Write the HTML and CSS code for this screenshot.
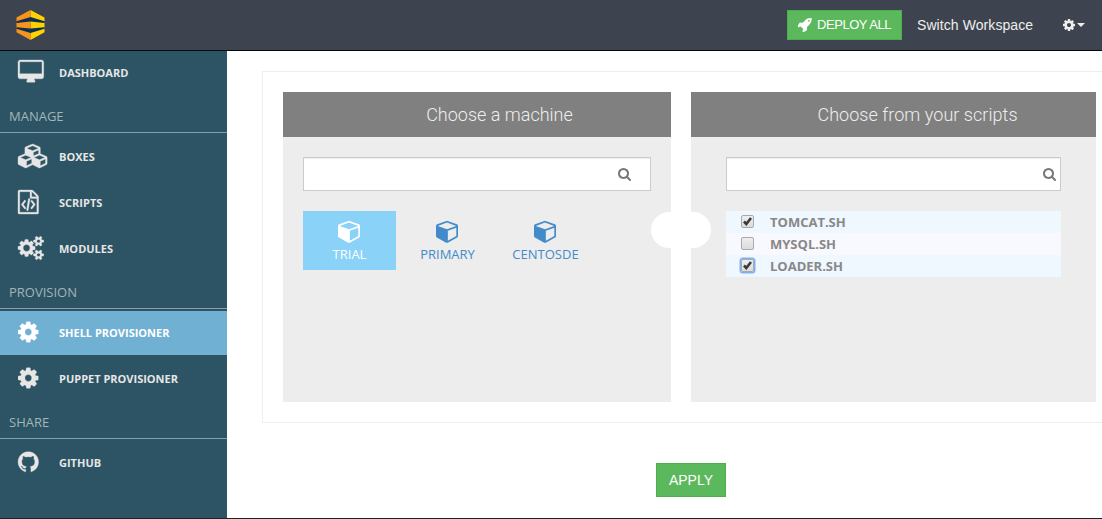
FILE: index.html
```html
<!DOCTYPE html>
<html lang="en">
<head>
<meta charset="utf-8">
<title>Shell Provisioner</title>
<link rel="stylesheet" href="styles.css">
</head>
<body>
<svg class="defs" aria-hidden="true">
  <symbol id="cog" viewBox="128 0 1536 1792"><path d="M1152 896q0-106-75-181t-181-75-181 75-75 181 75 181 181 75 181-75 75-181zm512-109v222q0 12-8 23t-20 13l-185 28q-19 54-39 91 35 50 107 138 10 12 10 25t-9 23q-27 37-99 108t-94 71q-12 0-26-9l-138-108q-44 23-91 38-16 136-29 186-7 28-36 28h-222q-14 0-24.500-8.500t-11.500-21.500l-28-184q-49-16-90-37l-141 107q-10 9-25 9-14 0-25-11-126-114-165-168-7-10-7-23 0-12 8-23 15-21 51-66.500t54-70.500q-27-50-41-99l-183-27q-13-2-21-12.500t-8-23.500v-222q0-12 8-23t19-13l186-28q14-46 39-92-40-57-107-138-10-12-10-24 0-10 9-23 26-36 98.500-107.500t94.500-71.500q13 0 26 10l138 107q44-23 91-38 16-136 29-186 7-28 36-28h222q14 0 24.500 8.500t11.500 21.500l28 184q49 16 90 37l142-107q9-9 24-9 13 0 25 10 129 119 165 170 7 8 7 22 0 12-8 23-15 21-51 66.500t-54 70.500q26 50 41 98l183 28q13 2 21 12.500t8 23.500z"/></symbol>
  <symbol id="search" viewBox="64 128 1664 1664"><path d="M1216 832q0-185-131.500-316.500t-316.500-131.500-316.500 131.500-131.500 316.500 131.500 316.500 316.500 131.500 316.500-131.500 131.500-316.500zm512 832q0 52-38 90t-90 38q-54 0-90-38l-343-342q-179 124-399 124-143 0-273.500-55.500t-225-150-150-225-55.500-273.500 55.500-273.500 150-225 225-150 273.500-55.500 273.500 55.500 225 150 150 225 55.500 273.500q0 220-124 399l343 343q37 37 37 90z"/></symbol>
  <symbol id="cube" viewBox="0 0 1664 1792"><path d="M896 1629l640-349v-636l-640 233v752zm-64-865l698-254-698-254-698 254zm832-252v768q0 35-18 65t-49 47l-704 384q-28 16-61 16t-61-16l-704-384q-31-17-49-47t-18-65v-768q0-40 23-73t61-47l704-256q22-8 44-8t44 8l704 256q38 14 61 47t23 73z"/></symbol>
  <symbol id="check" viewBox="0 0 13 13"><path d="M3 6.500L5.300 9 10 3" fill="none" stroke="#3a3a3a" stroke-width="2.600"/></symbol>
</svg>

<header class="topbar">
  <svg class="logo" viewBox="0 0 29 30">
    <path fill="#0c2f52" d="M1 9L14.500 7 28 9v12l-13.500 4L1 21z"/>
    <path fill="#f7941e" d="M14.500 0v7L.500 11.200V7.500zM.500 13l14-1.500v7L.500 17.200zM.500 18.700L14.500 23v7L.500 22.300z"/>
    <path fill="#ffd200" d="M14.500 0v7l14 4.200V7.500zM28.500 13l-14-1.500v7l14-1.300zM28.500 18.700L14.500 23v7l14-7.700z"/>
  </svg>
  <nav class="actions">
    <button class="btn deploy"><svg class="rocket" viewBox="128 128 1536 1600"><path d="M1440 448q0-40-28-68t-68-28-68 28-28 68 28 68 68 28 68-28 28-68zm224-288q0 249-75.500 430.500t-253.500 360.500q-81 80-195 176l-20 379q-2 16-16 26l-384 224q-7 4-16 4-12 0-23-9l-64-64q-13-14-8-32l85-276-281-281-276 85q-3 1-9 1-14 0-23-9l-64-64q-17-19-5-39l224-384q10-14 26-16l379-20q96-114 176-195 188-187 358-258t431-71q14 0 24 9.500t10 22.500z"/></svg><span>DEPLOY ALL</span></button>
    <a class="switch">Switch Workspace</a>
    <a class="settings"><svg class="cog-small"><use href="#cog"/></svg><i class="caret"></i></a>
  </nav>
</header>

<div class="body">
  <aside class="sidebar">
    <a class="item"><svg class="ico desktop" viewBox="0 0 1920 1792"><path d="M1792 992v-832q0-13-9.500-22.500t-22.500-9.500h-1600q-13 0-22.500 9.500t-9.500 22.500v832q0 13 9.500 22.500t22.500 9.500h1600q13 0 22.500-9.500t9.500-22.500zm128-832v1088q0 66-47 113t-113 47h-544q0 37 16 77.500t32 71 16 43.500q0 26-19 45t-45 19h-512q-26 0-45-19t-19-45q0-14 16-44t32-70 16-78h-544q-66 0-113-47t-47-113v-1088q0-66 47-113t113-47h1600q66 0 113 47t47 113z"/></svg><span>DASHBOARD</span></a>
    <h2 class="section">MANAGE</h2>
    <a class="item"><svg class="ico cubes" viewBox="0 0 2304 1792"><path d="M640 1632l384-192v-314l-384 164v342zm-64-454l404-173-404-173-404 173zm1088 454l384-192v-314l-384 164v342zm-64-454l404-173-404-173-404 173zm-448-293l384-165v-266l-384 164v267zm-64-379l441-189-441-189-441 189zm1088 518v416q0 36-19 67t-52 47l-448 224q-25 14-57 14t-57-14l-448-224q-4-2-7-4-2 2-7 4l-448 224q-25 14-57 14t-57-14l-448-224q-33-16-52-47t-19-67v-416q0-38 21.500-70t56.500-48l434-186v-400q0-38 21.500-70t56.500-48l448-192q23-10 50-10t50 10l448 192q35 16 56.500 48t21.500 70v400l434 186q36 16 57 48t21 70z"/></svg><span>BOXES</span></a>
    <a class="item"><svg class="ico narrow" viewBox="128 0 1536 1792"><path d="M1596 380q28 28 48 76t20 88v1152q0 40-28 68t-68 28h-1344q-40 0-68-28t-28-68v-1600q0-40 28-68t68-28h896q40 0 88 20t76 48zm-444-244v376h376q-10-29-22-41l-313-313q-12-12-41-22zm384 1528v-1024h-416q-40 0-68-28t-28-68v-416h-768v1536h1280z"/><path transform="translate(128)" d="M480 768q8-11 21-12.500t24 6.500l51 38q11 8 12.500 21t-6.500 24l-182 243 182 243q8 11 6.500 24t-12.500 21l-51 38q-11 8-24 6.500t-21-12.500l-226-301q-14-19 0-38zm802 301q14 19 0 38l-226 301q-8 11-21 12.500t-24-6.500l-51-38q-11-8-12.500-21t6.500-24l182-243-182-243q-8-11-6.500-24t12.500-21l51-38q11-8 24-6.500t21 12.500zm-620 461q-13-2-20.500-13t-5.500-24l138-831q2-13 13-20.500t24-5.500l63 10q13 2 20.500 13t5.500 24l-138 831q-2 13-13 20.500t-24 5.500z"/></svg><span>SCRIPTS</span></a>
    <a class="item"><svg class="ico desktop" viewBox="0 0 1920 1792"><path d="M896 896q0-106-75-181t-181-75-181 75-75 181 75 181 181 75 181-75 75-181zm768 512q0-52-38-90t-90-38-90 38-38 90q0 53 37.500 90.500t90.500 37.500 90.500-37.500 37.500-90.500zm0-1024q0-52-38-90t-90-38-90 38-38 90q0 53 37.500 90.500t90.500 37.500 90.500-37.500 37.500-90.500zm-384 421v185q0 10-7 19.500t-16 10.500l-155 24q-11 35-32 76 34 48 90 115 7 11 7 20 0 12-7 19-23 30-82.500 89.500t-78.500 59.500q-11 0-21-7l-115-90q-37 19-77 31-11 108-23 155-7 24-30 24h-186q-11 0-20-7.500t-10-17.500l-23-153q-34-10-75-31l-118 89q-7 7-20 7-11 0-21-8-144-133-144-160 0-9 7-19 10-14 41-53t47-61q-23-44-35-82l-152-24q-10-1-17-9.500t-7-19.500v-185q0-10 7-19.500t16-10.500l155-24q11-35 32-76-34-48-90-115-7-11-7-20 0-12 7-20 22-30 82-89t79-59q11 0 21 7l115 90q34-18 77-32 11-108 23-154 7-24 30-24h186q11 0 20 7.500t10 17.500l23 153q34 10 75 31l118-89q8-7 20-7 11 0 21 8 144 133 144 160 0 8-7 19-12 16-42 54t-45 60q23 48 34 82l152 23q10 2 17 10.500t7 19.500zm640 533v140q0 16-149 31-12 27-30 52 51 113 51 138 0 4-4 7-122 71-124 71-8 0-46-47t-52-68q-20 2-30 2t-30-2q-14 21-52 68t-46 47q-2 0-124-71-4-3-4-7 0-25 51-138-18-25-30-52-149-15-149-31v-140q0-16 149-31 13-29 30-52-51-113-51-138 0-4 4-7 4-2 35-20t59-34 30-16q8 0 46 46.500t52 67.500q20-2 30-2t30 2q51-71 92-112l6-2q4 0 124 70 4 3 4 7 0 25-51 138 17 23 30 52 149 15 149 31zm0-1024v140q0 16-149 31-12 27-30 52 51 113 51 138 0 4-4 7-122 71-124 71-8 0-46-47t-52-68q-20 2-30 2t-30-2q-14 21-52 68t-46 47q-2 0-124-71-4-3-4-7 0-25 51-138-18-25-30-52-149-15-149-31v-140q0-16 149-31 13-29 30-52-51-113-51-138 0-4 4-7 4-2 35-20t59-34 30-16q8 0 46 46.500t52 67.500q20-2 30-2t30 2q51-71 92-112l6-2q4 0 124 70 4 3 4 7 0 25-51 138 17 23 30 52 149 15 149 31z"/></svg><span>MODULES</span></a>
    <h2 class="section">PROVISION</h2>
    <a class="item active"><svg class="ico narrow"><use href="#cog"/></svg><span>SHELL PROVISIONER</span></a>
    <a class="item"><svg class="ico narrow"><use href="#cog"/></svg><span>PUPPET PROVISIONER</span></a>
    <h2 class="section">SHARE</h2>
    <a class="item"><svg class="ico narrow" viewBox="128 0 1536 1792"><path d="M896 128q209 0 385.500 103t279.500 279.500 103 385.500q0 251-146.500 451.500t-378.500 277.500q-27 5-40-7t-13-30q0-3 .500-76.500t.500-134.500q0-97-52-142 57-6 102.500-18t94-39 81-66.500 53-105 20.500-150.500q0-119-79-206 37-91-8-204-28-9-81 11t-92 44l-38 24q-93-26-192-26t-192 26q-16-11-42.500-27t-83.500-38.500-85-13.500q-45 113-8 204-79 87-79 206 0 85 20.500 150t52.500 105 80.500 67 94 39 102.500 18q-39 36-49 103-21 10-45 15t-57 5-65.500-21.500-55.500-62.500q-19-32-48.500-52t-49.500-24l-20-3q-21 0-29 4.500t-5 11.500 9 14 13 12l7 5q22 10 43.500 38t31.500 51l10 23q13 38 44 61.500t67 30 69.500 7 55.500-3.500l23-4q0 38 .500 88.500t.500 54.500q0 18-13 30t-40 7q-232-77-378.500-277.500t-146.500-451.500q0-209 103-385.500t279.500-279.500 385.500-103z"/></svg><span>GITHUB</span></a>
  </aside>

  <main class="main">
    <div class="board">
      <section class="col machines">
        <h3 class="title">Choose a machine</h3>
        <div class="field"><svg class="mag"><use href="#search"/></svg></div>
        <div class="tiles">
          <a class="tile selected"><svg class="cube"><use href="#cube"/></svg><span>TRIAL</span></a>
          <a class="tile"><svg class="cube"><use href="#cube"/></svg><span>PRIMARY</span></a>
          <a class="tile"><svg class="cube"><use href="#cube"/></svg><span>CENTOSDE</span></a>
        </div>
        <i class="link"></i>
      </section>
      <section class="col scripts">
        <h3 class="title">Choose from your scripts</h3>
        <div class="field"><svg class="mag"><use href="#search"/></svg></div>
        <div class="rows">
          <label class="row"><span class="box"><svg><use href="#check"/></svg></span><span>TOMCAT.SH</span></label>
          <label class="row alt"><span class="box"></span><span>MYSQL.SH</span></label>
          <label class="row"><span class="box focus"><svg><use href="#check"/></svg></span><span>LOADER.SH</span></label>
        </div>
      </section>
    </div>
    <button class="btn apply">APPLY</button>
  </main>
</div>
</body>
</html>
```

FILE: styles.css
```css
* { box-sizing: border-box; }
body {
  margin: 0;
  height: 519px;
  overflow: hidden;
  display: flex;
  flex-direction: column;
  background: #fff;
  border-bottom: 1px solid #222;
  font-family: "Open Sans", sans-serif;
}
svg { display: block; fill: currentColor; flex: none; }
.defs { display: none; }

.topbar {
  flex: none;
  height: 51px;
  display: flex;
  align-items: flex-start;
  justify-content: space-between;
  padding: 10px 17px 0 16px;
  background: #3e444f;
  border-bottom: 1px solid #080808;
  color: #eee;
  font-family: "Liberation Sans", Arial, sans-serif;
}
.logo { width: 29px; height: 30px; }
.actions { display: flex; align-items: center; height: 30px; }
.btn {
  display: flex;
  align-items: center;
  border: 1px solid #4cae4c;
  background: #5cb85c;
  color: #fff;
  font-family: "Liberation Sans", Arial, sans-serif;
  white-space: nowrap;
}
.deploy { width: 115px; height: 30px; padding: 0 0 1px 10px; gap: 5px; font-size: 13px; letter-spacing: -0.45px; }
.rocket { width: 14px; height: 14px; }
.switch { margin-left: 15px; width: 116px; font-size: 14px; letter-spacing: 0.08px; white-space: nowrap; }
.settings { margin-left: 30px; display: flex; align-items: center; gap: 2px; }
.cog-small { width: 12px; height: 14px; }
.caret { border: 4px solid transparent; border-top-color: #eee; border-bottom: 0; }

.body { flex: 1; display: flex; min-height: 0; }
.sidebar {
  flex: none;
  width: 227px;
  display: flex;
  flex-direction: column;
  gap: 2px;
  background: #2c5464;
  color: #e6e6e6;
}
.item {
  flex: none;
  height: 44px;
  display: grid;
  grid-template-columns: 41px 1fr;
  align-items: center;
  padding: 0 0 2px 18px;
  font-size: 11px;
  font-weight: 700;
}
.ico { height: 24px; margin-top: -1px; stroke: currentColor; stroke-width: 24px; overflow: visible; }
.desktop { width: 25.7px; }
.cubes { width: 30.9px; }
.narrow { width: 20.6px; }
.active { background: #70b0d3; color: #fff; }
.section {
  flex: none;
  height: 36px;
  margin: 0;
  padding: 2px 0 0 9px;
  border-bottom: 1px solid #879fa8;
  color: #a3b4ba;
  font-size: 13px;
  font-weight: 400;
  line-height: 34px;
}

.main { flex: none; width: 875px; padding: 20px 0 0 35px; }
.board {
  width: 860px;
  height: 352px;
  display: flex;
  gap: 20px;
  padding: 20px;
  border: 1px solid #eee;
}
.col { position: relative; flex: none; height: 310px; background: #ededed; }
.machines { width: 388px; }
.scripts { width: 405px; }
.title {
  height: 45px;
  margin: 0 0 20px;
  padding-left: 45px;
  background: #808080;
  color: #eee;
  font: 300 18px/45px Roboto, sans-serif;
  text-align: center;
}
.scripts .title { padding-left: 48px; letter-spacing: 0.04px; }
.field {
  height: 34px;
  display: flex;
  align-items: center;
  justify-content: flex-end;
  background: #fff;
  border: 1px solid #ccc;
  box-shadow: inset 0 1px 1px rgba(0, 0, 0, .075);
  color: #777;
}
.mag { width: 13px; height: 13px; }
.machines .field { margin: 0 20px; padding-right: 19px; }
.scripts .field { margin: 0 35px; padding-right: 4px; }
.tiles { display: flex; gap: 5px; margin: 20px 20px 0; }
.tile {
  width: 93px;
  height: 59px;
  display: flex;
  flex-direction: column;
  align-items: center;
  padding-top: 8px;
  color: #428bca;
  font-size: 13px;
  line-height: 18px;
}
.selected { background: #8ad2f8; color: #fff; }
.cube { width: 22px; height: 24px; margin-right: 2px; }
.tile span { margin-top: 2px; }
/* Connector overlapping both columns */
.link {
  position: absolute;
  z-index: 1;
  left: 368px;
  top: 120px;
  width: 60px;
  height: 36px;
  border-radius: 18px;
  background: #fff;
}
.rows { margin: 20px 30px 0 35px; width: 335px; }
.row {
  height: 22px;
  display: flex;
  align-items: center;
  gap: 16px;
  padding-left: 15px;
  background: #eff7ff;
  color: #888;
  font-size: 13px;
  font-weight: 700;
}
.alt { background: #f8f8ff; }
.box {
  width: 13px;
  height: 13px;
  margin: -2px 0 0;
  border: 1px solid #aaa;
  border-radius: 2px;
  background: linear-gradient(#eee, #dcdcdc);
}
.box svg { width: 13px; height: 13px; margin: -1px; }
.focus { box-shadow: 0 0 0 1.500px #7fb0f5; }
.apply {
  width: 70px;
  height: 34px;
  margin: 40px 0 0 394px;
  justify-content: center;
  padding: 0;
  font-size: 14px;
}
```
